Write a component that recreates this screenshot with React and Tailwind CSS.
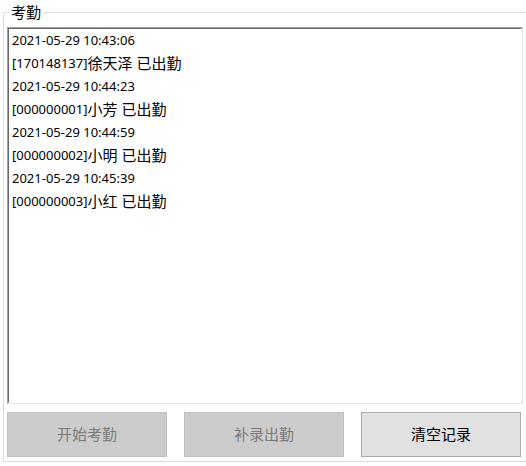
const rows = [
  { time: '2021-05-29 10:43:06', id: '170148137', name: '徐天泽' },
  { time: '2021-05-29 10:44:23', id: '000000001', name: '小芳' },
  { time: '2021-05-29 10:44:59', id: '000000002', name: '小明' },
  { time: '2021-05-29 10:45:39', id: '000000003', name: '小红' },
];

function Line({ children }) {
  return <div className="h-[23px] flex items-center whitespace-nowrap">{children}</div>;
}

function Button({ label, disabled }) {
  return (
    <button
      className={
        disabled
          ? 'w-[160px] h-[45px] bg-[#cccccc] border border-[#bfbfbf] text-[#7a7a7a] text-[15px]'
          : 'w-[160px] h-[45px] bg-[#e1e1e1] border border-[#adadad] text-black text-[15px]'
      }
    >
      {label}
    </button>
  );
}

export default function App() {
  return (
    <div className="w-[526px] h-[466px] bg-white overflow-hidden font-['Noto_Sans','Noto_Sans_CJK_SC',sans-serif] text-black">
      <div className="relative ml-[3px] mt-[12px] w-[526px] h-[450px] border border-[#dcdcdc]">
        {/* group title */}
        <div className="absolute left-[5px] top-[-12px] h-[22px] px-[2px] bg-white text-[15px] leading-[22px]">
          考勤
        </div>

        <div className="ml-[3px] mt-[14px] w-[516px] h-[377px] border-t border-l border-[#a0a0a0] border-r border-b border-r-[#e3e3e3] border-b-[#e3e3e3]">
          <div className="h-full border-t border-l border-[#696969] border-r border-b border-r-white border-b-white pl-[3px] text-[13px]">
            {rows.map((r) => (
              <div key={r.id}>
                <Line>{r.time}</Line>
                <Line>
                  <span>[{r.id}]</span>
                  <span className="text-[15px]">{r.name}</span>
                  <span className="text-[15px] ml-[4px]">已出勤</span>
                </Line>
              </div>
            ))}
          </div>
        </div>

        <div className="flex gap-[17px] ml-[3px] mt-[8px]">
          <Button label="开始考勤" disabled />
          <Button label="补录出勤" disabled />
          <Button label="清空记录" />
        </div>
      </div>
    </div>
  );
}
